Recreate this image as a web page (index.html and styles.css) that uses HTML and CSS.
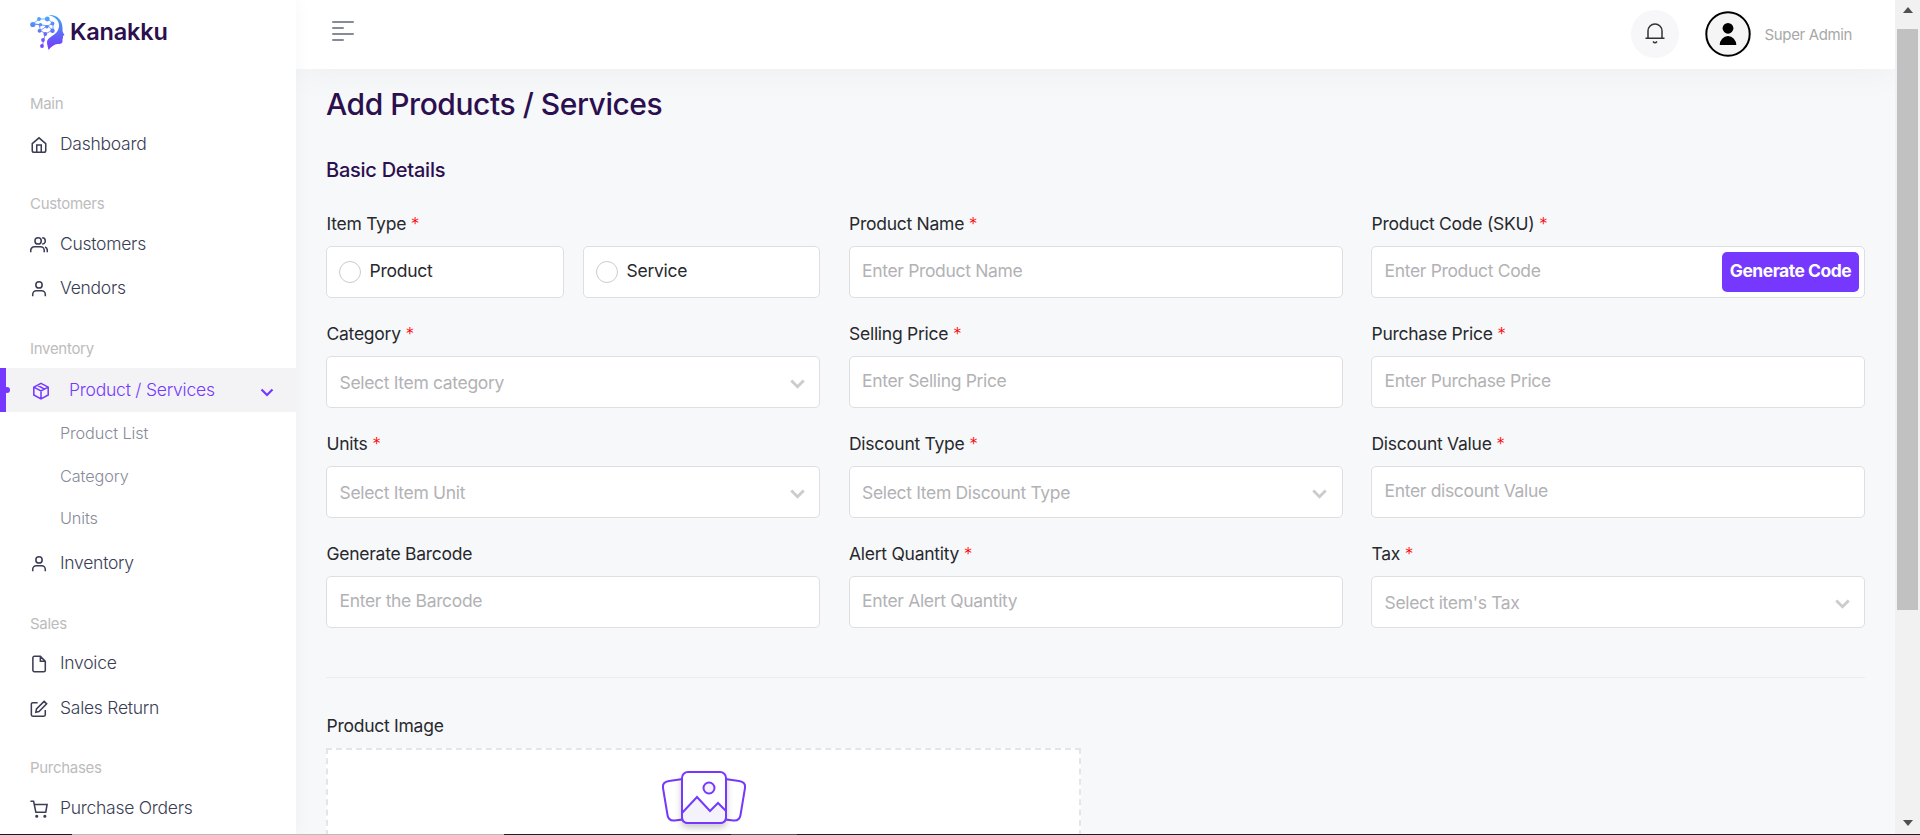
FILE: index.html
```html
<!DOCTYPE html>
<html lang="en">
<head>
<meta charset="utf-8">
<title>Kanakku - Add Products / Services</title>
<link rel="stylesheet" href="styles.css">
</head>
<body>
<div class="app">
  <aside class="sidebar">
    <div class="logo">
      <svg class="logo-mark" width="36" height="38" viewBox="0 0 36 38">
        <defs><linearGradient id="lg" x1="0" y1="0" x2="0" y2="1"><stop offset="0" stop-color="#3fa9f5"/><stop offset="1" stop-color="#7a35fb"/></linearGradient>
        <linearGradient id="lg2" gradientUnits="userSpaceOnUse" x1="0" y1="0" x2="0" y2="36"><stop offset="0" stop-color="#46b1fb"/><stop offset="1" stop-color="#7a35fb"/></linearGradient></defs>
        <path fill="url(#lg)" d="M19 1C27 .5 32.500 6 32.500 14c0 2 0 3 .5 4.500l1.500 2.500-1.500 1v2l-.500 1v2.500c0 2-2 2.500-5 2.500-3 .5-6 2-9 6-.5-3-1.500-5.500-1.500-7.500 0-5 6-6 9.500-10 5-6 3-15-8-17.500z"/>
        <g stroke="url(#lg2)" stroke-width=".8" fill="none"><path d="M3 10L9 5l9 0 5 4.500v7L18 12 9 10.500zM3 10l6 .5 1.500 6 5.500-4 7-3M15 20l8-4M15.500 20L13.500 26l-1 6M10 16.500l5.500 3"/></g>
        <g fill="url(#lg2)"><circle cx="2.800" cy="10.500" r="2.600"/><circle cx="9" cy="5" r="1.900"/><circle cx="17.300" cy="5" r="2.400"/><circle cx="22.500" cy="9.500" r="1.900"/><circle cx="10.500" cy="10.800" r="1.700"/><circle cx="16.800" cy="12.800" r="1.700"/><circle cx="22.500" cy="16.800" r="2.200"/><circle cx="9.500" cy="16.800" r="1.900"/><circle cx="15.300" cy="20" r="1.900"/><circle cx="13" cy="26" r="1.900"/><circle cx="12" cy="32" r="1.900"/></g>
      </svg>
      <span class="logo-text">Kanakku</span>
    </div>
    <nav class="menu">
      <div class="heading">Main</div>
      <a class="item"><svg class="icon" viewBox="0 0 20 20"><path d="M2.500 8.500 10 2l7.500 6.500V16a2 2 0 0 1-2 2h-11a2 2 0 0 1-2-2z M7.500 18v-8h5v8"/></svg>Dashboard</a>
      <div class="heading">Customers</div>
      <a class="item"><svg class="icon" viewBox="0 0 20 20"><circle cx="9" cy="5.500" r="3.500"/><path d="M.8 18v-2a4 4 0 0 1 4-4h7a4 4 0 0 1 4 4v2M13.500 2a3.500 3.500 0 0 1 0 7M19.200 18v-2a4 4 0 0 0-2.500-3.800"/></svg>Customers</a>
      <a class="item"><svg class="icon" viewBox="0 0 20 20"><circle cx="10" cy="5.500" r="3.500"/><path d="M3 18v-2a4 4 0 0 1 4-4h6a4 4 0 0 1 4 4v2"/></svg>Vendors</a>
      <div class="heading">Inventory</div>
      <a class="item active"><svg class="icon" viewBox="0 0 20 20"><path d="M10 1.500l8 4.200v8.800l-8 4.200-8-4.200V5.700zM2 5.700l8 4.300 8-4.300M10 10v8.700M6 3.600l8 4.300"/></svg><span class="grow">Product / Services</span><svg class="caret" viewBox="0 0 14 9"><path d="M1.500 1.500 7 7l5.500-5.500"/></svg></a>
      <a class="sub">Product List</a>
      <a class="sub">Category</a>
      <a class="sub">Units</a>
      <a class="item after-sub"><svg class="icon" viewBox="0 0 20 20"><circle cx="10" cy="5.500" r="3.500"/><path d="M3 18v-2a4 4 0 0 1 4-4h6a4 4 0 0 1 4 4v2"/></svg>Inventory</a>
      <div class="heading">Sales</div>
      <a class="item"><svg class="icon" viewBox="0 0 20 20"><path d="M11.500 1.500H4.800a1.600 1.600 0 0 0-1.600 1.600v13.800a1.600 1.600 0 0 0 1.600 1.600h10.600a1.600 1.600 0 0 0 1.600-1.600V7zM11.500 1.500V7H17"/></svg>Invoice</a>
      <a class="item"><svg class="icon" viewBox="0 0 20 20"><path d="M8.500 3H3a1.500 1.500 0 0 0-1.500 1.500v12A1.500 1.500 0 0 0 3 18h12.500a1.500 1.500 0 0 0 1.500-1.500V11M15.700 1.500l2.800 2.800-8.500 8.500-3.500.8.700-3.600z"/></svg>Sales Return</a>
      <div class="heading">Purchases</div>
      <a class="item"><svg class="icon" viewBox="0 0 20 20"><path d="M.5 1.500h3.500L6.500 13.500h11L19 5H4.700"/><circle cx="7.500" cy="18" r=".9"/><circle cx="16.500" cy="18" r=".9"/></svg>Purchase Orders</a>
    </nav>
  </aside>
  <div class="main">
    <header class="topbar">
      <svg class="burger" viewBox="0 0 22 20"><path d="M1 1h20M1 7h10M1 13h20M1 19h10"/></svg>
      <div class="user-area">
        <span class="bell"><svg width="20" height="22" viewBox="0 0 20 22"><path d="M.5 15.300h19M3 15V8a7 7 0 0 1 14 0v7"/><path d="M8 18.500q2 2.500 4 0"/></svg></span>
        <svg class="avatar" viewBox="0 0 46 46"><circle cx="23" cy="23" r="21.700"/><circle class="solid" cx="23" cy="17.300" r="5.400"/><path class="solid" d="M14.700 34a8.300 9 0 0 1 16.600 0z"/></svg>
        <span class="user-name">Super Admin</span>
      </div>
    </header>
    <main class="content">
      <h1 class="title">Add Products / Services</h1>
      <h2 class="subtitle">Basic Details</h2>
      <div class="grid">
        <div class="field"><div class="label">Item Type <b>*</b></div><div class="radios"><div class="box"><i class="radio"></i>Product</div><div class="box"><i class="radio"></i>Service</div></div></div>
        <div class="field"><div class="label">Product Name <b>*</b></div><div class="box ph">Enter Product Name</div></div>
        <div class="field"><div class="label">Product Code (SKU) <b>*</b></div><div class="box ph with-btn">Enter Product Code<span class="btn">Generate Code</span></div></div>
        <div class="field"><div class="label">Category <b>*</b></div><div class="box ph select">Select Item category<svg class="chev" viewBox="0 0 14 9"><path d="M1.200 1.200 7 7l5.800-5.800"/></svg></div></div>
        <div class="field"><div class="label">Selling Price <b>*</b></div><div class="box ph">Enter Selling Price</div></div>
        <div class="field"><div class="label">Purchase Price <b>*</b></div><div class="box ph">Enter Purchase Price</div></div>
        <div class="field"><div class="label">Units <b>*</b></div><div class="box ph select">Select Item Unit<svg class="chev" viewBox="0 0 14 9"><path d="M1.200 1.200 7 7l5.800-5.800"/></svg></div></div>
        <div class="field"><div class="label">Discount Type <b>*</b></div><div class="box ph select">Select Item Discount Type<svg class="chev" viewBox="0 0 14 9"><path d="M1.200 1.200 7 7l5.800-5.800"/></svg></div></div>
        <div class="field"><div class="label">Discount Value <b>*</b></div><div class="box ph">Enter discount Value</div></div>
        <div class="field"><div class="label">Generate Barcode</div><div class="box ph">Enter the Barcode</div></div>
        <div class="field"><div class="label">Alert Quantity <b>*</b></div><div class="box ph">Enter Alert Quantity</div></div>
        <div class="field"><div class="label">Tax <b>*</b></div><div class="box ph select">Select item's Tax<svg class="chev" viewBox="0 0 14 9"><path d="M1.200 1.200 7 7l5.800-5.800"/></svg></div></div>
      </div>
      <div class="divider"></div>
      <div class="label">Product Image</div>
      <div class="upload">
        <svg width="86" height="62" viewBox="0 0 86 62"><g fill="#fff" stroke="#7638ff" stroke-width="2"><path d="M22 9 8 11Q1 12 2 18l4.500 27q1 6 7 5.500l8.500-1M64 9l14 2q7 1 6 7l-4.500 27q-1 6-7 5.500l-8.500-1"/><rect class="card" x="21" y="2" width="44" height="51" rx="6"/><path fill="#f4f3fa" d="M21 43 36 27l13 14 8-8 8 8v6q0 6-6 6H27q-6 0-6-6z"/><circle cx="48" cy="18" r="5.500" fill="#f4f3fa"/></g></svg>
      </div>
    </main>
  </div>
  <div class="scrollbar"><i class="arrow up"></i><i class="thumb"></i><i class="arrow down"></i></div>
  <div class="taskbar"></div>
</div>
</body>
</html>
```
FILE: styles.css
```css
* { box-sizing: border-box; }
body { margin: 0; font-family: Inter, "Liberation Sans", sans-serif; overflow: hidden; }
.app { position: relative; display: flex; width: 1920px; height: 835px; overflow: hidden; background: #f7f8fa; }

.sidebar { position: relative; z-index: 1; width: 296px; flex: none; background: #fff; box-shadow: 0 0 18px rgba(0, 0, 0, .04); }
.logo { display: flex; align-items: flex-start; height: 66.25px; padding: 14px 0 0 30px; }
.logo-mark { flex: none; }
.logo-text { margin: 0 0 0 4px; font-size: 23.5px; line-height: 36px; font-weight: 600; letter-spacing: -.2px; color: #2c0f4e; }
.menu { display: flex; flex-direction: column; }
.heading { height: 55.5px; padding: 25.75px 0 0 30px; font-size: 15px; line-height: 24px; letter-spacing: -.3px; color: #bcbcbc; }
.item { display: flex; align-items: center; height: 44.5px; padding: 0 22px 2px 30px; gap: 12px; font-size: 17.5px; font-weight: 300; letter-spacing: -.26px; color: #3a3d55; }
.icon { width: 18px; height: 18px; margin-top: 3px; flex: none; fill: none; stroke: currentColor; stroke-width: 1.7; }
.active { height: 44px; margin-top: 2px; position: relative; background: #f3f3f6; color: #7638ff; border-left: 6px solid #7638ff; padding-left: 26px; gap: 19px; letter-spacing: -.22px; }
.active::before { content: ""; position: absolute; left: -2px; top: 19px; width: 6px; height: 6px; border-radius: 50%; background: #7638ff; }
.grow { flex: 1; }
.caret { width: 14px; height: 9px; fill: none; stroke: currentColor; stroke-width: 2.2; margin-top: 7px; }
.sub { height: 42.5px; line-height: 42px; padding-left: 60px; font-size: 16.25px; font-weight: 300; letter-spacing: -.1px; color: #878a99; }
.after-sub { margin-top: 1.5px; }

.main { width: 1599px; flex: none; }
.topbar { position: relative; display: flex; align-items: center; justify-content: space-between; height: 69px; padding: 0 43px 0 36px; background: #fff; box-shadow: 0 0 40px rgba(0, 0, 0, .05); }
.burger { width: 22px; height: 20px; margin-top: -7px; fill: none; stroke: #878a99; stroke-width: 2; stroke-linecap: round; }
.user-area { display: flex; align-items: center; margin-top: -1px; }
.bell { display: flex; align-items: center; justify-content: center; width: 48px; height: 48px; margin-right: 26px; border-radius: 50%; background: #f7f7fa; }
.bell svg { fill: none; stroke: #333; stroke-width: 1.5; }
.avatar { width: 46px; height: 46px; fill: #f5f5f5; stroke: #000; stroke-width: 2; }
.avatar .solid { fill: #000; stroke: none; }
.user-name { margin-left: 14px; font-size: 15px; letter-spacing: -.37px; color: #a8a8a8; }

.content { padding: 0 30px; }
.title { margin: 0; padding-top: 16px; font-size: 30px; line-height: 38px; font-weight: 500; letter-spacing: -.45px; color: #2c0f4e; }
.subtitle { margin: 35px 0 0; font-size: 20px; line-height: 24px; font-weight: 500; letter-spacing: -.25px; color: #2c0f4e; }
.grid { display: grid; grid-template-columns: repeat(3, 494px); column-gap: 28.5px; row-gap: 22.15px; margin-top: 28px; }
.label { height: 36px; padding-left: .5px; font-size: 17.5px; line-height: 28px; letter-spacing: -.26px; color: #28292e; }
.label b { color: #f00; font-weight: 300; }
.box { display: flex; align-items: center; height: 52px; padding: 0 12px 3px; border: 1px solid #dfdfe3; border-radius: 5px; background: #fff; font-size: 17.5px; letter-spacing: -.26px; color: #28292e; }
.ph { padding-left: 12.5px; letter-spacing: -.33px; color: #b2b2b5; }
.radios { display: grid; grid-template-columns: 238px 237px; gap: 19px; }
.radio { width: 22px; height: 22px; margin: 3px 8.5px 0 0; border: 1px solid #ccc; border-radius: 50%; }
.with-btn { justify-content: space-between; padding-right: 5px; }
.btn { width: 137px; height: 40px; border-radius: 5px; line-height: 38px; margin-top: 3px; text-align: center; background: #7638ff; color: #fff; font-weight: 700; letter-spacing: -.5px; }
.select { justify-content: space-between; padding-bottom: 0; }
.chev { width: 15px; height: 10px; margin: 4px 2.5px 0 0; fill: none; stroke: #ccc; stroke-width: 2.7; }
.divider { height: 1px; margin: 48.5px 0 34px; background: #ebecef; }
.upload { display: flex; justify-content: center; width: 755px; height: 180px; padding-top: 20px; border: 2px dashed #e4e5e8; background: #fff; }
.card { filter: drop-shadow(0 4px 3px rgba(0, 0, 0, .2)); }

.scrollbar { position: relative; display: flex; flex-direction: column; align-items: center; width: 25px; background: #f1f1f1; }
.thumb { width: 21px; height: 581px; margin: 16px 0 0; background: #c1c1c1; }
.arrow { width: 0; height: 0; border: 5.500px solid transparent; }
.up { border-top: 0; border-bottom: 6px solid #505050; margin-top: 7px; }
.down { border-bottom: 0; border-top: 6px solid #505050; margin-top: auto; margin-bottom: 9px; }
.taskbar { position: absolute; z-index: 2; left: 0; bottom: 0; width: 100%; height: 1px; background: linear-gradient(90deg, #111c2c 0 72px, #bbb 72px 504px, #18202e 504px 731px, #4a5260 731px 797px, #18202e 797px); }
```
